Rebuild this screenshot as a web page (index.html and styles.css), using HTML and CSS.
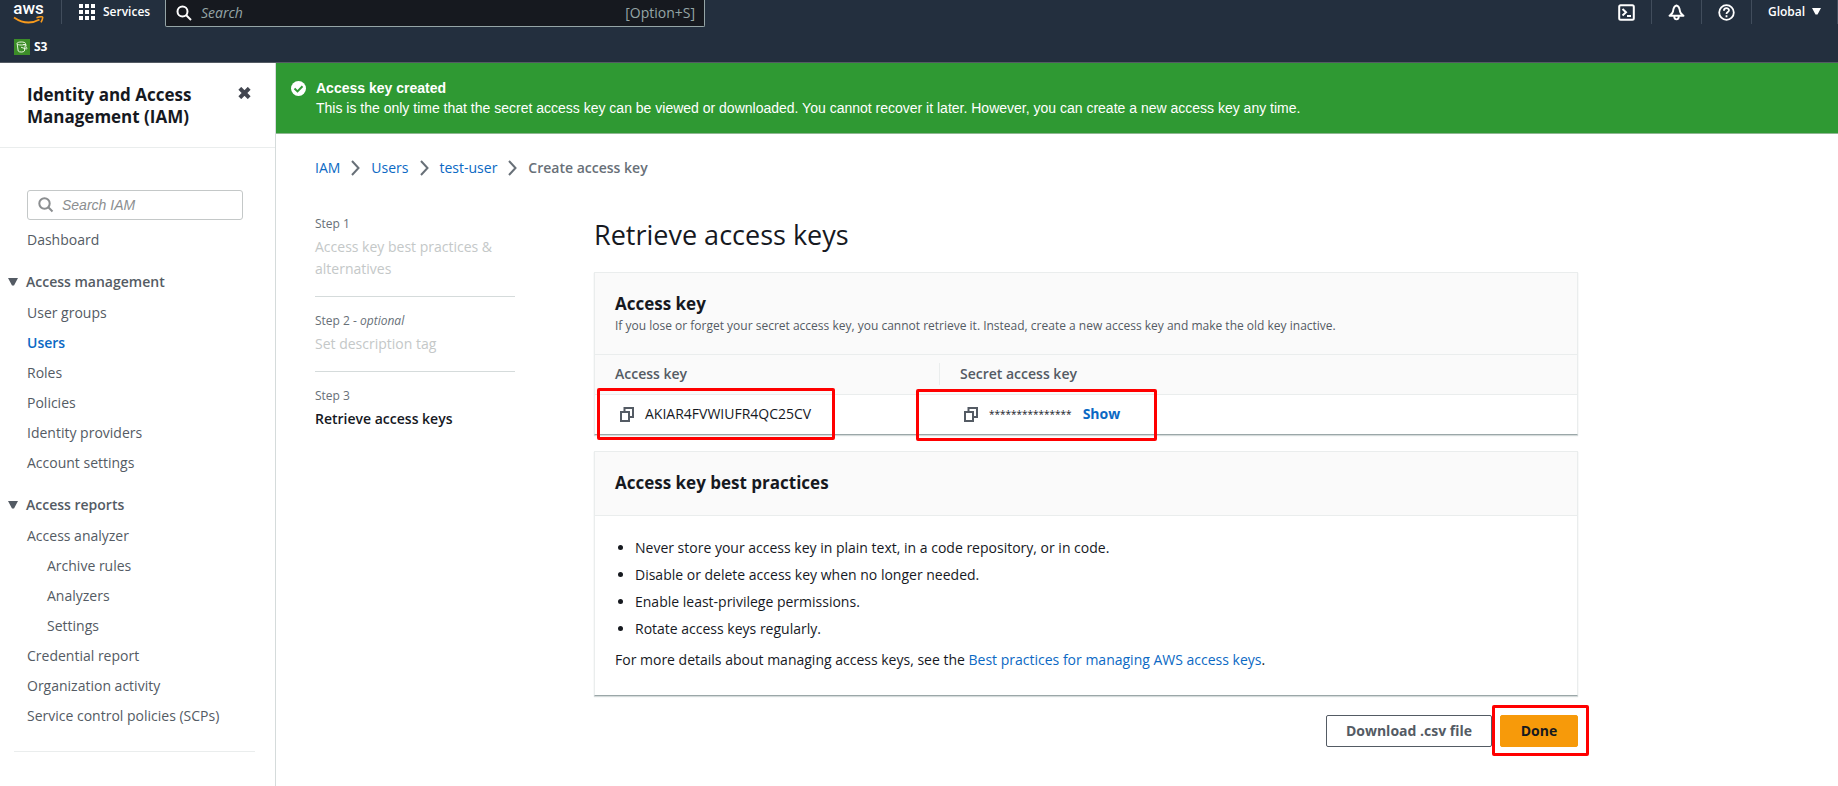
FILE: index.html
```html
<!DOCTYPE html>
<html lang="en">
<head>
<meta charset="utf-8">
<meta name="viewport" content="width=device-width, initial-scale=1">
<title>Retrieve access keys | IAM</title>
<link rel="stylesheet" href="styles.css">
</head>
<body>
<header class="top">
  <div class="topbar">
    <a class="logo" href="#" aria-label="Home">
      <span class="logo-word">aws</span>
      <svg class="logo-smile" width="31" height="8" viewBox="0 0 31 8" fill="none" stroke="#f79a1c"><path d="M1 1.500Q14 10.500 26.500 3.500" stroke-width="1.900"/><path d="M23.500 1.700Q29.500 0 29.700 1.300T28 6.400" stroke-width="1.600"/></svg>
    </a>
    <button class="services" type="button">
      <svg width="17" height="17" viewBox="0 0 17 17" fill="#fff"><path d="M0 0h4v4H0zM6 0h4v4H6zM12 0h4v4h-4zM0 6h4v4H0zM6 6h4v4H6zM12 6h4v4h-4zM0 12h4v4H0zM6 12h4v4H6zM12 12h4v4h-4z"/></svg>
      Services
    </button>
    <label class="gsearch">
      <svg width="16" height="16" viewBox="0 0 16 16" fill="none" stroke="#fff" stroke-width="2"><circle cx="6.500" cy="6.500" r="5"/><path d="M10 10l5 5"/></svg>
      <input type="search" placeholder="Search" aria-label="Search">
      <span>[Option+S]</span>
    </label>
    <nav class="tools" aria-label="Utilities">
      <button type="button" aria-label="CloudShell"><svg width="17" height="17" viewBox="0 0 17 17" fill="none" stroke="#fff" stroke-width="2"><rect x="1.200" y="1.200" width="14.600" height="14.600" rx="1.500"/><path d="M4.500 5L8 8.300l-3.500 3.300M9 12h4"/></svg></button>
      <button type="button" aria-label="Notifications"><svg width="17" height="17" viewBox="0 0 17 17" fill="none" stroke="#fff" stroke-width="1.900" stroke-linejoin="round"><path d="M8.500 1.500C5.500 2.200 5.300 5 5 7.500 4.700 9.500 3.500 10.300 1.500 11.800h14C13.500 10.300 12.300 9.500 12 7.500 11.700 5 11.500 2.200 8.500 1.500zM6.200 12c0 4.500 4.600 4.500 4.600 0"/></svg></button>
      <button type="button" aria-label="Help"><svg width="17" height="17" viewBox="0 0 17 17" fill="none" stroke="#fff" stroke-width="1.800"><circle cx="8.500" cy="8.500" r="7.300"/><path d="M5.900 6.700C5.900 3.400 11 3.500 11 6.300c0 1.900-2.500 1.700-2.500 3.700M8.500 11.300v2"/></svg></button>
      <button class="region" type="button">Global <svg width="9" height="8" viewBox="0 0 9 8" fill="#fff"><path d="M0 0h9L5.500 6.500h-2z"/></svg></button>
    </nav>
  </div>
  <nav class="favorites" aria-label="Favorites">
    <a href="#"><svg width="16" height="16" viewBox="0 0 16 16" fill="none"><rect width="16" height="16" fill="#3c8d28"/><path d="M3 4.500c0-2 8.500-2 8.500 0s-8.500 2-8.500 0zM3.200 5l1 7c1 1.400 5.200 1.400 6.200 0l1-7M7 8.200l4.500 1.600c2 .4 2.200-1 .3-1.600M9 5.500h3v2" stroke="#e6f5df"/></svg>S3</a>
  </nav>
</header>
<div class="shell">
  <aside class="side">
    <div class="side-head">
      <h2>Identity and Access Management (IAM)</h2>
      <button type="button" aria-label="Close"><svg width="13" height="12" viewBox="0 0 13 12" stroke="#424650" stroke-width="4"><path d="M1.800 1.300l9.400 9.400M11.200 1.300l-9.400 9.400"/></svg></button>
    </div>
    <div class="side-body">
      <label class="isearch">
        <svg width="16" height="16" viewBox="0 0 16 16" fill="none" stroke="#8b8e90" stroke-width="2"><circle cx="6.500" cy="6.500" r="5.200"/><path d="M10.300 10.300l4.200 4.200"/></svg>
        <input type="search" placeholder="Search IAM" aria-label="Search IAM">
      </label>
      <nav class="menu" aria-label="IAM">
        <a href="#">Dashboard</a>
        <button type="button"><svg width="10" height="8" viewBox="0 0 10 8" fill="#545b64"><path d="M0 0h10L6 7.500H4z"/></svg>Access management</button>
        <a href="#">User groups</a>
        <a class="current" href="#">Users</a>
        <a href="#">Roles</a>
        <a href="#">Policies</a>
        <a href="#">Identity providers</a>
        <a href="#">Account settings</a>
        <button type="button"><svg width="10" height="8" viewBox="0 0 10 8" fill="#545b64"><path d="M0 0h10L6 7.500H4z"/></svg>Access reports</button>
        <a href="#">Access analyzer</a>
        <a class="sub" href="#">Archive rules</a>
        <a class="sub" href="#">Analyzers</a>
        <a class="sub" href="#">Settings</a>
        <a href="#">Credential report</a>
        <a href="#">Organization activity</a>
        <a href="#">Service control policies (SCPs)</a>
      </nav>
    </div>
  </aside>
  <main class="main">
    <div class="flash" role="status">
      <svg width="15" height="15" viewBox="0 0 15 15"><circle cx="7.500" cy="7.500" r="7.500" fill="#fff"/><path d="M3.500 7.500l3 2.900 5-5.200" fill="none" stroke="#2f9933" stroke-width="2"/></svg>
      <div><strong>Access key created</strong><p>This is the only time that the secret access key can be viewed or downloaded. You cannot recover it later. However, you can create a new access key any time.</p></div>
    </div>
    <div class="content">
      <nav class="crumbs" aria-label="Breadcrumb">
        <a href="#">IAM</a><svg width="9" height="16" viewBox="0 0 9 16"><path d="M1 1l6.500 7L1 15"/></svg>
        <a href="#">Users</a><svg width="9" height="16" viewBox="0 0 9 16"><path d="M1 1l6.500 7L1 15"/></svg>
        <a href="#">test-user</a><svg width="9" height="16" viewBox="0 0 9 16"><path d="M1 1l6.500 7L1 15"/></svg>
        <span>Create access key</span>
      </nav>
      <div class="wizard">
        <ol class="steps">
          <li><small>Step 1</small><span>Access key best practices &amp; alternatives</span></li>
          <li><small>Step 2 - <i>optional</i></small><span>Set description tag</span></li>
          <li class="active"><small>Step 3</small><span>Retrieve access keys</span></li>
        </ol>
        <section class="panel">
          <h1>Retrieve access keys</h1>
          <div class="card">
            <div class="card-head">
              <h2>Access key</h2>
              <p>If you lose or forget your secret access key, you cannot retrieve it. Instead, create a new access key and make the old key inactive.</p>
            </div>
            <table class="keys">
              <thead><tr><th scope="col">Access key</th><th scope="col"><span>Secret access key</span></th></tr></thead>
              <tbody><tr>
                <td><div class="cell mark mark-id"><button type="button" aria-label="Copy access key"><svg width="14" height="15" viewBox="0 0 14 15"><path d="M1 5h8v9H1zM4.500 5V1H13v9H9"/></svg></button><span>AKIAR4FVWIUFR4QC25CV</span></div></td>
                <td><div class="cell mark mark-secret"><button type="button" aria-label="Copy secret access key"><svg width="14" height="15" viewBox="0 0 14 15"><path d="M1 5h8v9H1zM4.500 5V1H13v9H9"/></svg></button><span class="stars">***************</span><a href="#">Show</a></div></td>
              </tr></tbody>
            </table>
          </div>
          <div class="card">
            <div class="card-head solo"><h2>Access key best practices</h2></div>
            <div class="card-body">
              <ul>
                <li>Never store your access key in plain text, in a code repository, or in code.</li>
                <li>Disable or delete access key when no longer needed.</li>
                <li>Enable least-privilege permissions.</li>
                <li>Rotate access keys regularly.</li>
              </ul>
              <p>For more details about managing access keys, see the <a href="#">Best practices for managing AWS access keys</a>.</p>
            </div>
          </div>
          <div class="actions">
            <button class="btn" type="button">Download .csv file</button>
            <div class="mark mark-done"><button class="btn primary" type="button">Done</button></div>
          </div>
        </section>
      </div>
    </div>
  </main>
</div>
</body>
</html>
```
FILE: styles.css
```css
*, *::before, *::after { box-sizing: border-box; }
body {
  margin: 0;
  min-height: 100vh;
  display: flex;
  flex-direction: column;
  font: 14px/22px "Open Sans", "Noto Sans", sans-serif;
  color: #16191f;
  background: #fff;
}
h1, h2, p, ul, ol { margin: 0; padding: 0; }
a { color: #0b69c4; text-decoration: none; }
button, input { font: inherit; color: inherit; }
button { padding: 0; border: 0; background: none; cursor: pointer; }
svg { display: block; flex: none; }
input { min-width: 0; flex: 1; padding: 0; border: 0; outline: 0; background: none; }

.top { background: #232f3e; border-bottom: 1px solid #545b64; color: #fff; }
.topbar { display: flex; height: 27px; }
.logo { width: 61px; padding-left: 13px; color: #fff; }
.logo-word { display: block; width: 31px; font: 500 17px/16px Roboto, "Open Sans", sans-serif; text-align: center; }
.services { display: flex; align-items: center; gap: 7px; width: 104px; height: 24px; padding-left: 17px; border-left: 1px solid #414d5c; font-size: 12px; font-weight: 600; }
.gsearch {
  display: flex; align-items: center; gap: 9px;
  width: 540px; padding: 0 9px 1px 10px;
  background: #16191f; border: solid #95a5a6; border-width: 0 1px 1px; border-radius: 0 0 2px 2px;
  color: #95a5a6;
}
.gsearch input::placeholder { color: #95a5a6; font-style: italic; opacity: 1; }
.tools { display: flex; height: 24px; margin-left: auto; }
.tools button { display: flex; align-items: center; justify-content: center; width: 50px; border-right: 1px solid #414d5c; }
.tools .region { width: 86px; gap: 7px; font-size: 12px; font-weight: 600; }
.favorites { display: flex; align-items: center; height: 35px; padding: 5px 14px 0; }
.favorites a { display: flex; align-items: center; gap: 4px; line-height: 20px; font-size: 12px; font-weight: 700; color: #fff; }

.shell { flex: 1; display: flex; }
.side { width: 276px; flex: none; border-right: 1px solid #d5dbdb; }
.side-head { display: flex; justify-content: space-between; align-items: flex-start; padding: 21px 24px 19px 27px; border-bottom: 1px solid #eaeded; }
.side-head h2 { width: 190px; font-size: 17px; line-height: 22px; font-weight: 700; }
.side-head button { margin-top: 3px; }
.side-body { margin: 0 20px 0 14px; padding: 42px 0 20px; border-bottom: 1px solid #eaeded; }
.isearch { display: flex; align-items: center; gap: 8px; height: 30px; margin: 0 12px 0 13px; padding: 0 10px; border: 1px solid #c4c8c8; border-radius: 3px; font: italic 14px "Liberation Sans", Arial, sans-serif; }
.isearch input::placeholder { color: #8b8e90; opacity: 1; }
.menu { display: flex; flex-direction: column; padding: 5px 0 0 13px; }
.menu a { line-height: 30px; color: #545b64; }
.menu .current { color: #0b69c4; font-weight: 600; }
.menu .sub { padding-left: 20px; }
.menu button { display: flex; align-items: center; gap: 8px; margin: 12px 0 1px -19px; line-height: 30px; font-weight: 600; color: #545b64; }

.main { flex: 1; min-width: 0; }
.flash { display: flex; gap: 10px; padding: 15px; background: #2f9933; border-bottom: 1px solid #8fb792; color: #fff; font: 14px/20px "Liberation Sans", Arial, sans-serif; }
.flash svg { margin-top: 3px; }
.content { padding: 23px 260px 30px 39px; }
.crumbs { display: flex; align-items: center; gap: 11px; }
.crumbs svg { fill: none; stroke: #687078; stroke-width: 2; }
.crumbs span { color: #687078; font-weight: 600; }
.wizard { display: grid; grid-template-columns: 200px minmax(0, 1fr); gap: 79px; padding-top: 35px; }
.steps { list-style: none; }
.steps li { padding-bottom: 16px; margin-bottom: 14px; border-bottom: 1px solid #d5dbdb; color: #c4c8c8; }
.steps li:last-child { border: 0; }
.steps small { display: block; margin-bottom: 2px; font-size: 12px; line-height: 20px; color: #687078; }
.steps .active { color: #16191f; font-weight: 600; }
.steps .active small { font-weight: 400; }
.panel { display: flex; flex-direction: column; gap: 16px; }
.panel h1 { font-size: 27px; line-height: 42px; font-weight: 400; }
.card { border: 1px solid #eaeded; border-bottom: 1px solid #9ba7a8; box-shadow: 0 1px 1px #d5dbdb; }
.card-head { padding: 20px 20px 17px; background: #fafafa; border-bottom: 1px solid #eaeded; }
.card-head.solo { padding-bottom: 21px; }
.card-head h2 { font-size: 17px; line-height: 22px; font-weight: 700; }
.card-head p { font-size: 12px; line-height: 22px; color: #545b64; }
.keys { width: 100%; border-collapse: collapse; table-layout: fixed; text-align: left; }
.keys th:first-child { width: 344px; }
.keys th { height: 39px; padding: 0 0 0 20px; background: #fafafa; border-bottom: 1px solid #eaeded; font-weight: 600; color: #545b64; }
.keys th + th { padding: 0; }
.keys th + th span { display: block; padding-left: 20px; border-left: 1px solid #eaeded; }
.keys td { height: 40px; padding: 0; }
.cell { display: flex; align-items: center; gap: 11px; padding-left: 25px; }
.cell svg { fill: none; stroke: #545b64; stroke-width: 2; }
.cell a { font-weight: 700; }
.stars { font-size: 10px; }
.mark { position: relative; }
.mark::after { content: ""; position: absolute; border: 3px solid #f00; border-radius: 2px; pointer-events: none; }
.mark-id::after { left: 2px; top: -15px; width: 238px; height: 52px; }
.mark-secret::after { left: -23px; top: -14px; width: 241px; height: 52px; }
.mark-done::after { inset: -10px -11px -9px -8px; }
.card-body { padding: 18px 20px 21px; }
.card-body ul { padding-left: 20px; }
.card-body li { line-height: 27px; }
.card-body p { padding-top: 4px; line-height: 28px; }
.actions { display: flex; justify-content: flex-end; gap: 8px; padding-top: 3px; }
.btn { height: 32px; padding: 0 19px; border: 1px solid #545b64; border-radius: 2px; font-weight: 700; color: #545b64; }
.btn.primary { width: 78px; border-color: #f79a0a; background: #f79a0a; color: #16191f; }
```
